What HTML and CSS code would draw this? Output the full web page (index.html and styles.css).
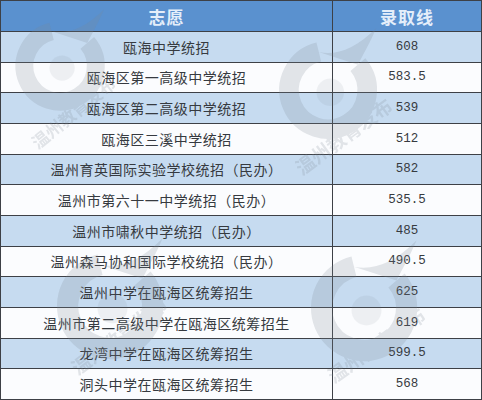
FILE: index.html
```html
<!DOCTYPE html>
<html lang="zh-CN">
<head>
<meta charset="utf-8">
<link rel="stylesheet" href="styles.css">
</head>
<body>
<div class="page">
  <div class="table">
    <div class="cell head">志愿</div><div class="cell head">录取线</div>
    <div class="cell name odd">瓯海中学统招</div><div class="cell num odd">608</div>
    <div class="cell name">瓯海区第一高级中学统招</div><div class="cell num">583.5</div>
    <div class="cell name odd">瓯海区第二高级中学统招</div><div class="cell num odd">539</div>
    <div class="cell name">瓯海区三溪中学统招</div><div class="cell num">512</div>
    <div class="cell name odd">温州育英国际实验学校统招（民办）</div><div class="cell num odd">582</div>
    <div class="cell name">温州市第六十一中学统招（民办）</div><div class="cell num">535.5</div>
    <div class="cell name odd">温州市啸秋中学统招（民办）</div><div class="cell num odd">485</div>
    <div class="cell name">温州森马协和国际学校统招（民办）</div><div class="cell num">490.5</div>
    <div class="cell name odd">温州中学在瓯海区统筹招生</div><div class="cell num odd">625</div>
    <div class="cell name">温州市第二高级中学在瓯海区统筹招生</div><div class="cell num">619</div>
    <div class="cell name odd">龙湾中学在瓯海区统筹招生</div><div class="cell num odd">599.5</div>
    <div class="cell name">洞头中学在瓯海区统筹招生</div><div class="cell num">568</div>
  </div>
  <svg class="watermark" width="482" height="400" viewBox="0 0 482 400">
    <defs>
      <g id="logo">
        <path d="M26 -22 A34 34 0 1 1 -8 -33" fill="none" stroke="#7d8792" stroke-width="17"/>
        <circle cx="2" cy="2" r="12" fill="#7d8792" opacity="0.5"/>
        <path d="M-8 -33 C 8 -30 24 -36 42 -54 C 36 -40 30 -30 26 -22" fill="#7d8792"/>
      </g>
    </defs>
    <g class="mark">
      <use href="#logo" transform="translate(60 66) scale(1.05)"/>
      <text class="wm-text" transform="translate(38 150) rotate(-39)">温州教育发布</text>
      <use href="#logo" transform="translate(328 90) scale(1.15)"/>
      <text class="wm-text big" transform="translate(302 176) rotate(-36)">温州教育发布</text>
      <use href="#logo" transform="translate(110 306) scale(1.25)"/>
      <text class="wm-text big" transform="translate(78 376) rotate(-37)">温州教育发布</text>
      <use href="#logo" transform="translate(364 308) scale(1.25)"/>
      <text class="wm-text big" transform="translate(334 384) rotate(-35)">温州教育发布</text>
    </g>
  </svg>
</div>
</body>
</html>
```
FILE: styles.css
```css
html, body {
  margin: 0;
  padding: 0;
  background: #ffffff;
}
.page {
  position: relative;
  width: 482px;
  height: 400px;
  overflow: hidden;
}
.table {
  display: grid;
  grid-template-columns: 331px 1fr;
  grid-template-rows: 30px repeat(12, 1fr);
  gap: 1px;
  padding: 1px;
  height: 400px;
  box-sizing: border-box;
  background: #3d4046;
}
.cell {
  display: flex;
  align-items: center;
  justify-content: center;
  background: #fbfcfe;
  color: #363a40;
  font-family: "Noto Sans CJK SC", "Noto Sans", sans-serif;
}
.cell.odd {
  background: #c6dbf0;
}
.head {
  background: #5a91cf;
  color: #e4eefa;
  font-weight: 700;
  font-size: 17px;
  letter-spacing: 1px;
}
.name {
  font-size: 14px;
  letter-spacing: 0.5px;
}
.num {
  font-family: "Liberation Mono", "DejaVu Sans Mono", monospace;
  font-size: 12.5px;
}
.watermark {
  position: absolute;
  left: 0;
  top: 0;
  pointer-events: none;
}
.mark {
  opacity: 0.2;
}
.wm-text {
  font-family: "Noto Sans CJK SC", sans-serif;
  font-weight: 700;
  font-size: 17px;
  fill: #7d8792;
}
.wm-text.big {
  font-size: 19px;
}
```
